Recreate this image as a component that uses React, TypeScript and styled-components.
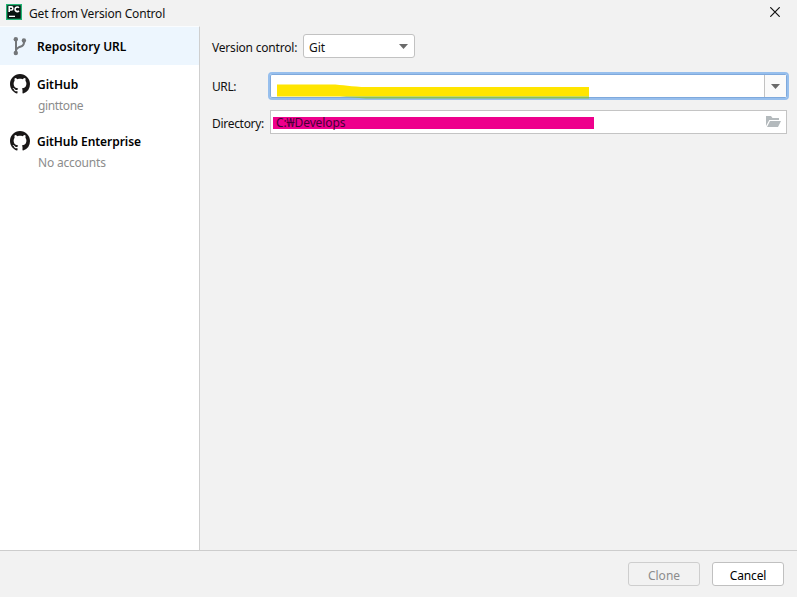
import React from "react";
import styled, { createGlobalStyle } from "styled-components";

const GlobalStyle = createGlobalStyle`
  * { box-sizing: border-box; }
  body {
    margin: 0;
    overflow: hidden;
    background: #f2f2f2;
    color: #111;
    font: 12px/18px "Noto Sans", "Noto Sans CJK KR", sans-serif;
  }
  svg { display: block; flex: none; }
`;

const Dialog = styled.div`
  display: grid;
  grid-template-rows: 26px 524px 47px;
  width: 797px;
  height: 597px;
  background: #f2f2f2;
`;

const TitleBar = styled.header`
  display: flex;
  align-items: flex-start;
  justify-content: space-between;
  padding: 4px 17px 0 6px;
`;

const Title = styled.div`
  display: flex;
  gap: 7px;
`;

const CloseButton = styled.button`
  padding: 3px 0 0;
  border: 0;
  background: none;
`;

const Label = styled.span<{ $spacing?: number; $drop?: number }>`
  padding-top: ${(p) => p.$drop ?? 0}px;
  white-space: pre;
  letter-spacing: ${(p) => p.$spacing ?? 0}px;
`;

const Body = styled.div`
  display: grid;
  grid-template-columns: 200px 1fr;
`;

const Sidebar = styled.nav`
  border-right: 1px solid #cfcfcf;
  border-top: 1px solid #fafcfe;
  background: #fff;
`;

const NavItem = styled.div<{ $selected?: boolean; $height: number }>`
  display: flex;
  gap: 7px;
  height: ${(p) => p.$height}px;
  padding: 9px 0 0 10px;
  background: ${(p) => (p.$selected ? "#edf6fe" : "#fff")};
`;

const NavText = styled.div`
  display: flex;
  flex-direction: column;
  gap: 3px;
  padding-top: 2px;
`;

const NavTitle = styled(Label)`
  font-weight: 600;
  color: #000;
`;

const NavDetail = styled(Label)`
  padding-left: 1px;
  color: #8c8c8c;
`;

const Form = styled.main`
  display: grid;
  grid-template-rows: 24px 28px 24px;
  row-gap: 12px;
  align-content: start;
  padding: 8px 8px 0 12px;
`;

const FieldRow = styled.div<{ $label: number }>`
  display: grid;
  grid-template-columns: ${(p) => p.$label}px 1fr;
  align-items: center;
`;

const UrlRow = styled(FieldRow)`
  margin: 2px 0 -2px;
`;

const Select = styled.div`
  display: flex;
  align-items: center;
  justify-content: space-between;
  width: 112px;
  height: 24px;
  padding: 0 6px 0 5px;
  border: 1px solid #c2c2c2;
  border-radius: 3px;
  background: #fff;
`;

const UrlBox = styled.div`
  position: relative;
  display: grid;
  grid-template-columns: 1fr 23px;
  height: 28px;
  border: 2px solid #97bfed;
  border-radius: 4px;
  background: #fff;
  box-shadow: inset 0 0 0 1px #7fa9dc;
`;

const UrlButton = styled.div`
  display: flex;
  align-items: center;
  justify-content: center;
  margin: 1px 1px 1px 0;
  border-left: 1px solid #c2c2c2;
  background: #fafafa;
`;

const Marker = styled.svg`
  position: absolute;
  left: 6px;
  top: 8px;
`;

const DirectoryBox = styled.div`
  display: flex;
  align-items: center;
  justify-content: space-between;
  width: 517px;
  height: 24px;
  margin-left: 2px;
  padding: 0 5px 0 2px;
  border: 1px solid #c4c4c4;
  background: #fff;
`;

const Highlight = styled.div`
  display: flex;
  align-items: center;
  width: 321px;
  height: 12px;
  margin-top: 2px;
  padding-left: 3px;
  background: #ee008c;
  color: #460036;
`;

const Footer = styled.footer`
  display: flex;
  justify-content: flex-end;
  gap: 12px;
  padding: 11px 13px 0 0;
  border-top: 1px solid #cdcdcd;
`;

const Button = styled.button<{ $muted?: boolean }>`
  width: 72px;
  height: 24px;
  padding: 3px 0 0;
  border: 1px solid ${(p) => (p.$muted ? "#cecece" : "#c0c0c0")};
  border-radius: 3px;
  background: ${(p) => (p.$muted ? "#f2f2f2" : "#fff")};
  color: ${(p) => (p.$muted ? "#8c8c8c" : "#000")};
  font: inherit;
  line-height: 18px;
`;

const PyCharmIcon = () => (
  <svg width="16" height="16" viewBox="0 0 16 16">
    <path fill="#21b573" d="M0 0h16v16H0z" />
    <path fill="#07130f" d="M1.3 1.3h13.4v13.4H1.3z" />
    <path d="M3.2 8V2.9h2.1a1.5 1.5 0 0 1 0 3.1H3.2M13 3.7A2.3 2.3 0 1 0 13 6.9" fill="none" stroke="#fff" strokeWidth="1.6" />
    <path fill="#fff" d="M3 11.7h6V13H3z" />
  </svg>
);

const BranchIcon = () => (
  <svg width="20" height="20" viewBox="0 0 20 20">
    <g fill="none" stroke="#737679" strokeWidth="2">
      <path d="M6 3v14M14 5v1.5c0 4-3 3.8-5.3 4.8-1.6.7-2.3 1.7-2.7 3" />
    </g>
    <g fill="#737679">
      <circle cx="5.8" cy="3.2" r="2.2" />
      <circle cx="5.8" cy="17" r="2.2" />
      <circle cx="13.9" cy="4.5" r="2.2" />
    </g>
  </svg>
);

const GitHubIcon = () => (
  <svg width="20" height="20" viewBox="0 0 16 16">
    <path
      fill="#191717"
      d="M8 0C3.58 0 0 3.58 0 8c0 3.54 2.29 6.53 5.47 7.59.4.07.55-.17.55-.38 0-.19-.01-.82-.01-1.49-2.01.37-2.53-.49-2.69-.94-.09-.23-.48-.94-.82-1.13-.28-.15-.68-.52-.01-.53.63-.01 1.08.58 1.23.82.72 1.21 1.87.87 2.33.66.07-.52.28-.87.51-1.07-1.78-.2-3.64-.89-3.64-3.95 0-.87.31-1.59.82-2.15-.08-.2-.36-1.02.08-2.12 0 0 .67-.21 2.2.82.64-.18 1.32-.27 2-.27s1.36.09 2 .27c1.53-1.04 2.2-.82 2.2-.82.44 1.1.16 1.92.08 2.12.51.56.82 1.27.82 2.15 0 3.07-1.87 3.75-3.65 3.95.29.25.54.73.54 1.48 0 1.07-.01 1.93-.01 2.2 0 .21.15.46.55.38A8.01 8.01 0 0 0 16 8c0-4.42-3.58-8-8-8z"
    />
  </svg>
);

const Arrow = () => (
  <svg width="9" height="5" viewBox="0 0 9 5">
    <path fill="#6a6a6a" d="M0 0h9L4.5 5z" />
  </svg>
);

const FolderIcon = () => (
  <svg width="15" height="12" viewBox="0 0 15 12">
    <path fill="#b4babd" d="M0 10V0h5l1.5 2H13v2H3.3zM4 5h11l-3 6H1z" />
  </svg>
);

export default function App() {
  return (
    <>
      <GlobalStyle />
      <Dialog>
        <TitleBar>
          <Title>
            <PyCharmIcon />
            <Label $drop={1} $spacing={-0.18}>Get from Version Control</Label>
          </Title>
          <CloseButton aria-label="Close">
            <svg width="10" height="10" viewBox="0 0 10 10">
              <path d="M.3.3l9.4 9.4M9.7.3L.3 9.7" stroke="#111" strokeWidth="1.2" />
            </svg>
          </CloseButton>
        </TitleBar>
        <Body>
          <Sidebar>
            <NavItem $selected $height={38}>
              <BranchIcon />
              <NavTitle $drop={2}>Repository URL</NavTitle>
            </NavItem>
            <NavItem $height={57}>
              <GitHubIcon />
              <NavText>
                <NavTitle>GitHub</NavTitle>
                <NavDetail $spacing={-0.35}>ginttone</NavDetail>
              </NavText>
            </NavItem>
            <NavItem $height={57}>
              <GitHubIcon />
              <NavText>
                <NavTitle $spacing={-0.05}>GitHub Enterprise</NavTitle>
                <NavDetail $spacing={-0.2}>No accounts</NavDetail>
              </NavText>
            </NavItem>
          </Sidebar>
          <Form>
            <FieldRow $label={91}>
              <Label $drop={3} $spacing={-0.2}>Version control:</Label>
              <Select>
                <Label $drop={3}>Git</Label>
                <Arrow />
              </Select>
            </FieldRow>
            <UrlRow $label={56}>
              <Label $drop={2} $spacing={-0.4}>URL:</Label>
              <UrlBox>
                <span />
                <UrlButton>
                  <Arrow />
                </UrlButton>
                <Marker width="314" height="17" viewBox="0 0 314 17">
                  <path fill="#ffe500" d="M1 2.5h54c12 0 20 2.5 36 2.5h222v9.5H1z" />
                  <path fill="#8cc152" d="M64 14.5h249v2H90z" />
                </Marker>
              </UrlBox>
            </UrlRow>
            <FieldRow $label={56}>
              <Label $drop={4} $spacing={-0.3}>Directory:</Label>
              <DirectoryBox>
                <Highlight>
                  <Label $spacing={-0.1}>C:₩Develops</Label>
                </Highlight>
                <FolderIcon />
              </DirectoryBox>
            </FieldRow>
          </Form>
        </Body>
        <Footer>
          <Button $muted>Clone</Button>
          <Button>
            <Label $spacing={-0.15}>Cancel</Label>
          </Button>
        </Footer>
      </Dialog>
    </>
  );
}
